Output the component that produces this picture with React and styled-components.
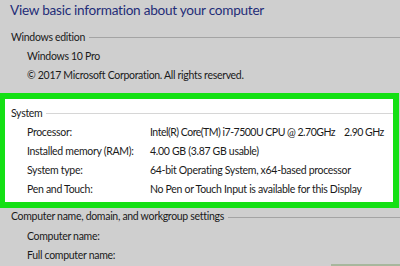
import React from "react";
import styled, { createGlobalStyle } from "styled-components";

const Global = createGlobalStyle`
  html, body { margin: 0; padding: 0; }
  body { width: 400px; height: 266px; overflow: hidden; background: #cfcfcf; }
  * { box-sizing: border-box; }
`;

const Page = styled.div`
  width: 400px;
  height: 266px;
  background: #cfcfcf;
  font-family: "Lato", "Open Sans", sans-serif;
  color: #1a1a1a;
  position: relative;
  overflow: hidden;
  display: flex;
  flex-direction: column;
`;

const Title = styled.div`
  font-size: 13.6px;
  letter-spacing: -0.26px;
  color: #1f2d78;
  padding-left: 10px;
  height: 26px;
  line-height: 20px;
  white-space: nowrap;
`;

const Section = styled.div`
  display: flex;
  flex-direction: column;
`;

const Highlight = styled.div`
  width: 399px;
  border: 6px solid #14e014;
  border-left-width: 5px;
  background: #ffffff;
  margin-top: 8px;
  padding: 3px 0 3px 0;
  display: flex;
  flex-direction: column;
`;

const text = `
  font-size: 10.5px;
  letter-spacing: -0.3px;
  white-space: nowrap;
`;

const Header = styled.div`
  ${text}
  display: flex;
  align-items: center;
  height: ${(p) => p.$h || "21px"};
  padding-left: ${(p) => p.$pl || "11px"};
  &::after {
    content: "";
    flex: 1;
    height: 1px;
    margin-left: 4px;
    margin-top: 2px;
    background: ${(p) => p.$line || "#a4a4a4"};
  }
`;

const Line = styled.div`
  ${text}
  height: 19px;
  line-height: 19px;
  margin-top: ${(p) => p.$mt || "0"};
  padding-left: 27px;
`;

const Row = styled.div`
  ${text}
  display: grid;
  grid-template-columns: 123px 1fr;
  height: 19px;
  line-height: 19px;
  padding-left: 22px;
`;

const Value = styled.span`
  letter-spacing: ${(p) => (p.$tight ? "-0.5px" : "inherit")};
`;

const Speed = styled.span`
  margin-left: 9px;
`;

const Corner = styled.div`
  position: absolute;
  right: 0;
  bottom: 0;
  width: 69px;
  height: 2px;
  background: #a7b79d;
`;

export default function App() {
  return (
    <Page>
      <Global />
      <Title>View basic information about your computer</Title>
      <Section>
        <Header>Windows edition</Header>
        <Line>Windows 10 Pro</Line>
        <Line>© 2017 Microsoft Corporation. All rights reserved.</Line>
      </Section>
      <Highlight>
        <Header $pl="6px" $line="#d6d6d6">System</Header>
        <Row>
          <span>Processor:</span>
          <Value $tight>
            Intel(R) Core(TM) i7-7500U CPU @ 2.70GHz<Speed>2.90 GHz</Speed>
          </Value>
        </Row>
        <Row>
          <span>Installed memory (RAM):</span>
          <Value>4.00 GB (3.87 GB usable)</Value>
        </Row>
        <Row>
          <span>System type:</span>
          <Value>64-bit Operating System, x64-based processor</Value>
        </Row>
        <Row>
          <span>Pen and Touch:</span>
          <Value>No Pen or Touch Input is available for this Display</Value>
        </Row>
      </Highlight>
      <Section>
        <Header $h="16px">Computer name, domain, and workgroup settings</Header>
        <Line $mt="3px">Computer name:</Line>
        <Line>Full computer name:</Line>
      </Section>
      <Corner />
    </Page>
  );
}
